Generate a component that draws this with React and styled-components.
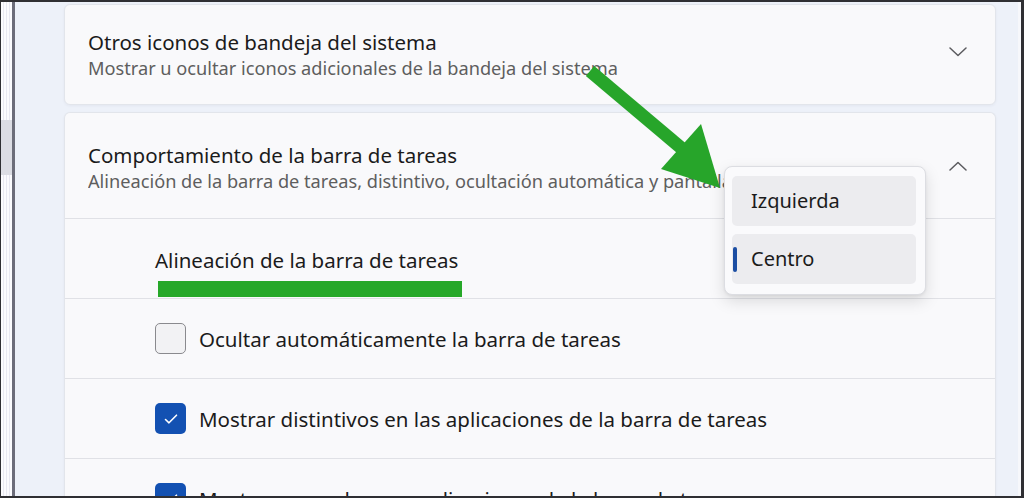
import React from "react";
import styled, { createGlobalStyle } from "styled-components";

const Global = createGlobalStyle`
  html, body { margin: 0; padding: 0; background: #edf1f9; }
  body { font-family: "Noto Sans", "Open Sans", sans-serif; }
  * { box-sizing: border-box; }
`;

const Frame = styled.div`
  position: relative;
  width: 1024px;
  height: 498px;
  display: flex;
  overflow: hidden;
  border-style: solid;
  border-color: #2f2f33;
  border-width: 2px 3px 2px 1px;
  background: #edf1f9;
`;

const LeftEdge = styled.div`
  width: 11px;
  flex: none;
  background: repeating-linear-gradient(
    90deg,
    #fbfbfe 0px,
    #fbfbfe 2px,
    #e8e8f1 2px,
    #e8e8f1 3px
  );
`;

const EdgeTab = styled.div`
  margin-top: 118px;
  height: 55px;
  background: #dcdde4;
`;

const EdgeLine = styled.div`
  width: 3px;
  flex: none;
  background: #6c6d7a;
`;

const Content = styled.div`
  flex: 1;
  display: flex;
  flex-direction: column;
  gap: 7px;
  padding: 2px 22px 0 49px;
  background: #edf1f9;
`;

const RightEdge = styled.div`
  width: 3px;
  flex: none;
  background: #f6f7fb;
`;

const Card = styled.section`
  position: relative;
  flex: none;
  background: #f9f9fb;
  border: 1px solid #e2e5eb;
  border-radius: 6px;
  box-shadow: 0 1px 3px rgba(30, 40, 70, 0.05);
  ${(p) => (p.$open ? "border-bottom: none; border-radius: 6px 6px 0 0;" : "")}
`;

const CardHeader = styled.div`
  height: ${(p) => p.$h}px;
  display: flex;
  align-items: center;
  padding: ${(p) => p.$pt || 0}px 28px 0 23px;
`;

const HeaderText = styled.div`
  flex: 1;
  display: flex;
  flex-direction: column;
  white-space: nowrap;
  overflow: hidden;
`;

const Title = styled.div`
  font-size: 20.5px;
  line-height: 26px;
  color: #1b1b1b;
`;

const Subtitle = styled.div`
  font-size: 18.2px;
  line-height: 26px;
  color: #5e5e5e;
`;

const ChevronBox = styled.div`
  width: 18px;
  height: 10px;
  flex: none;
  margin-top: ${(p) => p.$dy || 0}px;
  display: flex;
`;

const Row = styled.div`
  height: 80px;
  border-top: 1px solid #e0e1e6;
  display: flex;
  flex-direction: ${(p) => (p.$column ? "column" : "row")};
  align-items: ${(p) => (p.$column ? "flex-start" : "center")};
  padding: ${(p) => (p.$column ? "29px 0 0 90px" : "0 0 0 90px")};
  gap: ${(p) => (p.$column ? 9 : 13)}px;
`;

const OptionLabel = styled.span`
  font-size: 20.5px;
  line-height: 24px;
  color: #1b1b1b;
  white-space: nowrap;
`;

const Highlight = styled.div`
  width: 304px;
  height: 16px;
  margin-left: 3px;
  background: #26a829;
`;

const Box = styled.div`
  width: 31px;
  height: 31px;
  flex: none;
  border-radius: 5px;
  display: flex;
  align-items: center;
  justify-content: center;
  background: ${(p) => (p.$checked ? "#1351b2" : "#f2f2f4")};
  border: ${(p) => (p.$checked ? "none" : "1.5px solid #8a8a8e")};
`;

const Dropdown = styled.div`
  position: absolute;
  left: 659px;
  top: 53px;
  width: 202px;
  height: 129px;
  padding: 9px 9px 9px 7px;
  display: flex;
  flex-direction: column;
  gap: 8px;
  background: #fafafc;
  border: 1px solid #dcdde2;
  border-radius: 8px;
  box-shadow: 0 6px 16px rgba(0, 0, 0, 0.13), 0 1px 3px rgba(0, 0, 0, 0.06);
  z-index: 2;
`;

const MenuItem = styled.div`
  height: 50px;
  display: flex;
  align-items: center;
  padding-left: 1px;
  border-radius: 5px;
  background: #ececef;
`;

const Indicator = styled.span`
  width: 4px;
  height: 25px;
  border-radius: 2px;
  flex: none;
  background: ${(p) => (p.$on ? "#1c4ea3" : "transparent")};
`;

const MenuText = styled.span`
  margin-left: 14px;
  font-size: 20px;
  line-height: 24px;
  color: #1b1b1b;
`;

const ArrowLayer = styled.svg`
  position: absolute;
  left: -1px;
  top: -2px;
  width: 1024px;
  height: 498px;
  pointer-events: none;
  z-index: 1;
`;

function Chevron({ up, dy }) {
  return (
    <ChevronBox $dy={dy}>
      <svg width="18" height="10" viewBox="0 0 18 10">
        <path
          d={up ? "M1 9 L9 1.5 L17 9" : "M1 1 L9 8.5 L17 1"}
          fill="none"
          stroke="#5b5b5f"
          strokeWidth="1.5"
          strokeLinecap="round"
          strokeLinejoin="round"
        />
      </svg>
    </ChevronBox>
  );
}

function Check({ checked }) {
  return (
    <Box $checked={checked}>
      {checked && (
        <svg width="16" height="12" viewBox="0 0 16 12">
          <path
            d="M2.5 6.5 L6 9.8 L13.5 2.2"
            fill="none"
            stroke="#ffffff"
            strokeWidth="1.6"
            strokeLinecap="round"
            strokeLinejoin="round"
          />
        </svg>
      )}
    </Box>
  );
}

const options = [
  { label: "Ocultar automáticamente la barra de tareas", checked: false },
  {
    label: "Mostrar distintivos en las aplicaciones de la barra de tareas",
    checked: true,
  },
  {
    label: "Mostrar parpadeos en aplicaciones de la barra de tareas",
    checked: true,
  },
];

export default function App() {
  return (
    <>
      <Global />
      <Frame>
        <LeftEdge>
          <EdgeTab />
        </LeftEdge>
        <EdgeLine />
        <Content>
          <Card>
            <CardHeader $h={99}>
              <HeaderText>
                <Title>Otros iconos de bandeja del sistema</Title>
                <Subtitle>
                  Mostrar u ocultar iconos adicionales de la bandeja del sistema
                </Subtitle>
              </HeaderText>
              <Chevron dy={-6} />
            </CardHeader>
          </Card>
          <Card $open>
            <CardHeader $h={105} $pt={4}>
              <HeaderText>
                <Title>Comportamiento de la barra de tareas</Title>
                <Subtitle>
                  Alineación de la barra de tareas, distintivo, ocultación
                  automática y pantallas múltiples
                </Subtitle>
              </HeaderText>
              <Chevron up dy={-4} />
            </CardHeader>
            <Row $column>
              <OptionLabel>Alineación de la barra de tareas</OptionLabel>
              <Highlight />
            </Row>
            {options.map((o) => (
              <Row key={o.label}>
                <Check checked={o.checked} />
                <OptionLabel>{o.label}</OptionLabel>
              </Row>
            ))}
            <Dropdown>
              <MenuItem>
                <Indicator />
                <MenuText>Izquierda</MenuText>
              </MenuItem>
              <MenuItem>
                <Indicator $on />
                <MenuText>Centro</MenuText>
              </MenuItem>
            </Dropdown>
          </Card>
        </Content>
        <RightEdge />
        <ArrowLayer viewBox="0 0 1024 498">
          <line
            x1="590"
            y1="71"
            x2="686"
            y2="152"
            stroke="#27a52a"
            strokeWidth="13"
          />
          <polygon points="661,169 701,124 720,188" fill="#27a52a" />
        </ArrowLayer>
      </Frame>
    </>
  );
}
